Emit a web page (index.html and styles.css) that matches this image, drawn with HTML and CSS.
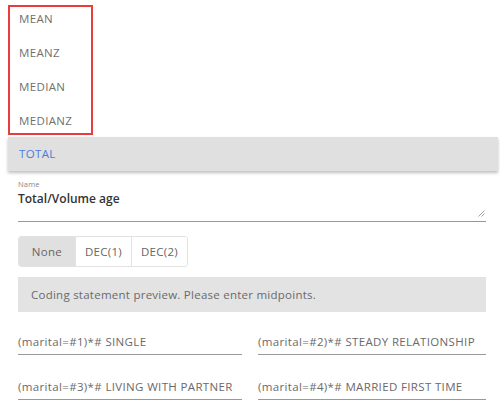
FILE: index.html
```html
<!DOCTYPE html>
<html lang="en">
<head>
  <meta charset="UTF-8" />
  <title>Coding statement</title>
  <link rel="stylesheet" href="styles.css">
</head>
<body>
  <!-- statistic list -->
  <ul class="stat-list">
    <li>MEAN</li>
    <li>MEANZ</li>
    <li>MEDIAN</li>
    <li>MEDIANZ</li>
  </ul>

  <div class="total-bar">TOTAL</div>

  <div class="panel">
    <div class="name-field">
      <label>Name</label>
      <div class="name-value">Total/Volume age</div>
      <svg class="grip" width="7" height="7" viewBox="0 0 7 7"><path d="M6.5 0.5 L0.5 6.5 M6.5 3.5 L3.5 6.5" stroke="#888" stroke-width="0.8"/></svg>
    </div>

    <div class="btn-group">
      <button class="active">None</button>
      <button>DEC(1)</button>
      <button>DEC(2)</button>
    </div>

    <div class="preview">Coding statement preview. Please enter midpoints.</div>

    <div class="codes">
      <div class="code">(marital=#1)*# SINGLE</div>
      <div class="code">(marital=#2)*# STEADY RELATIONSHIP</div>
      <div class="code">(marital=#3)*# LIVING WITH PARTNER</div>
      <div class="code">(marital=#4)*# MARRIED FIRST TIME</div>
    </div>
  </div>
</body>
</html>
```

FILE: styles.css
```css
html,body{margin:0;background:#fff;font-family:"Open Sans","DejaVu Sans",sans-serif;color:#666}
body{padding:5px 2px 0 8px;overflow:hidden}

.stat-list{list-style:none;margin:0;padding:5px 0;width:81px;border:2px solid #eb3b3b}
.stat-list li{font-size:11.5px;letter-spacing:0.35px;padding-left:9px;height:14px;line-height:14px;margin-bottom:20px;color:#707070}
.stat-list li:last-child{margin-bottom:0}

.total-bar{margin-top:2px;height:34px;line-height:34px;background:#e0e0e0;color:#4a7be0;font-size:11.5px;letter-spacing:0.35px;padding-left:11px;box-shadow:0 2px 3px rgba(0,0,0,0.25)}

.panel{padding:0 12px 0 10px}
.name-field{position:relative;border-bottom:1px solid #999;padding-top:8px;box-sizing:border-box;height:51px}
.name-field label{display:block;font-size:7.5px;color:#888;line-height:10px;letter-spacing:0.2px}
.name-value{font-size:12px;font-weight:600;color:#333;margin-top:1px}
.grip{position:absolute;right:1px;bottom:4px}

.btn-group{display:inline-flex;margin-top:14px;border:1px solid #e2e2e2;border-radius:3px;overflow:hidden}
.btn-group button{font-family:inherit;font-size:11.5px;letter-spacing:0.3px;color:#666;background:#fff;border:0;border-left:1px solid #e2e2e2;width:56px;height:29px;padding:0}
.btn-group button:first-child{border-left:0}
.btn-group button.active{background:#e0e0e0}

.preview{margin-top:10px;background:#e3e3e3;height:35px;line-height:35px;padding-left:13px;font-size:11.5px;letter-spacing:0.25px;color:#6a6a6a}

.codes{display:grid;grid-template-columns:224px 228px;column-gap:16px;row-gap:18px;margin-top:16px}
.code{font-size:11.5px;letter-spacing:0.35px;color:#6a6a6a;border-bottom:1px solid #999;height:27px;line-height:27px;box-sizing:border-box;white-space:nowrap}
```
